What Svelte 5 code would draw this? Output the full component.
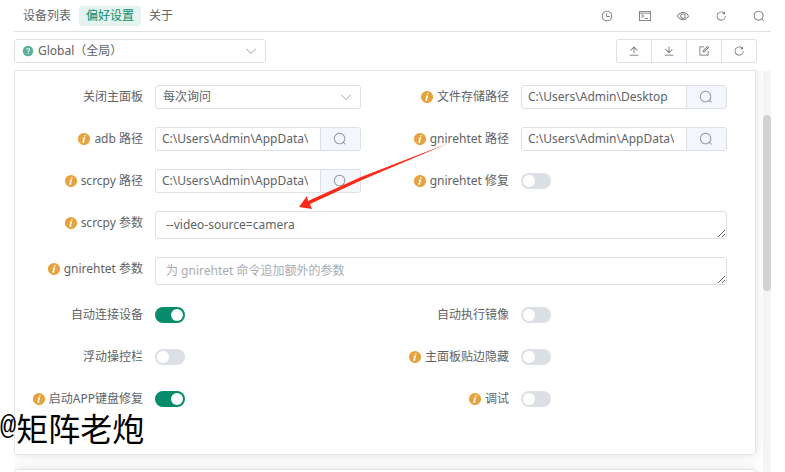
<script>
  const icons = {
    clock:
      "M512 896a384 384 0 1 0 0-768 384 384 0 0 0 0 768zm0 64a448 448 0 1 1 0-896 448 448 0 0 1 0 896z M480 256a32 32 0 0 1 32 32v256a32 32 0 0 1-64 0V288a32 32 0 0 1 32-32z M480 512h256q32 0 32 32t-32 32H480q-32 0-32-32t32-32z",
    terminal:
      "M0 96h1024v832H0zM64 288v576h896V288zM64 160v64h896v-64z M210 380l46-46 190 170-190 170-46-46 140-124z M480 690h290v64H480z",
    view: "M512 160c320 0 512 352 512 352S832 864 512 864 0 512 0 512s192-352 512-352zm0 64c-225.28 0-384.128 208.064-436.8 288 52.608 79.872 211.456 288 436.8 288 225.28 0 384.128-208.064 436.8-288-52.608-79.872-211.456-288-436.8-288zm0 64a224 224 0 1 1 0 448 224 224 0 0 1 0-448zm0 64a160.192 160.192 0 0 0-160 160c0 88.192 71.744 160 160 160s160-71.808 160-160-71.744-160-160-160z",
    refresh:
      "M784.512 230.272v-50.56a32 32 0 1 1 64 0v149.056a32 32 0 0 1-32 32H667.52a32 32 0 1 1 0-64h92.992A320 320 0 1 0 524.8 833.152a320 320 0 0 0 320-320h64a384 384 0 0 1-384 384 384 384 0 0 1-384-384 384 384 0 0 1 643.712-282.88z",
    search:
      "m795.904 750.72 124.992 124.928a32 32 0 0 1-45.248 45.248L750.656 795.904a416 416 0 1 1 45.248-45.248zM480 832a352 352 0 1 0 0-704 352 352 0 0 0 0 704z",
    upload:
      "M160 832h704a32 32 0 1 1 0 64H160a32 32 0 1 1 0-64m384-578.304V704h-64V247.296L237.248 490.048 192 444.8 508.8 128l316.8 316.8-45.312 45.248z",
    download:
      "M160 832h704a32 32 0 1 1 0 64H160a32 32 0 1 1 0-64m384-253.696 236.288-236.352 45.248 45.248L508.8 704 192 387.2l45.248-45.248L480 584.704V128h64z",
    edit: "M832 512a32 32 0 1 1 64 0v352a32 32 0 0 1-32 32H160a32 32 0 0 1-32-32V160a32 32 0 0 1 32-32h352a32 32 0 0 1 0 64H192v640h640z M469.952 554.24l52.8-7.552L847.104 222.4a32 32 0 1 0-45.248-45.248L477.44 501.44l-7.552 52.8zm422.4-422.4a96 96 0 0 1 0 135.808l-331.84 331.84a32 32 0 0 1-18.112 9.088L436.8 623.68a32 32 0 0 1-36.224-36.224l15.104-105.6a32 32 0 0 1 9.024-18.112l331.904-331.84a96 96 0 0 1 135.744 0z",
    arrow:
      "M831.872 340.864 512 652.672 192.128 340.864a30.592 30.592 0 0 0-42.752 0 29.12 29.12 0 0 0 0 41.6L489.664 714.24a32 32 0 0 0 44.672 0l340.288-331.712a29.12 29.12 0 0 0 0-41.728 30.592 30.592 0 0 0-42.752 0z",
    info: "M512 64a448 448 0 1 1 0 896.064A448 448 0 0 1 512 64zm67.2 275.072c33.28 0 60.288-23.104 60.288-57.344s-27.072-57.344-60.288-57.344c-33.28 0-60.16 23.104-60.16 57.344s26.88 57.344 60.16 57.344zM590.912 699.2c0-6.848 2.368-24.64 1.024-34.752l-52.608 60.544c-10.88 11.456-24.512 19.392-30.912 17.28a12.992 12.992 0 0 1-8.256-14.72l87.68-276.992c7.168-35.136-12.544-67.2-54.336-71.296-44.096 0-108.992 44.736-148.48 101.504 0 6.784-1.28 23.68.064 33.792l52.544-60.608c10.88-11.328 23.552-19.328 29.952-17.152a12.8 12.8 0 0 1 7.808 16.128L388.48 728.576c-10.048 32.256 8.96 63.872 55.04 71.04 67.84 0 107.904-43.648 147.456-100.416z",
    question:
      "M512 64a448 448 0 1 1 0 896 448 448 0 0 1 0-896zm23.744 191.488c-52.096 0-92.928 14.784-123.2 44.352-30.976 29.568-45.76 70.4-45.76 122.496h80.256c0-29.568 5.632-52.8 17.6-68.992 13.376-19.712 35.2-28.864 66.176-28.864 23.936 0 42.944 6.336 56.32 19.712 12.672 13.376 19.712 31.68 19.712 54.912 0 17.6-6.336 34.496-19.008 49.984l-8.448 9.856c-45.76 40.832-73.216 70.4-82.368 89.408-9.856 19.008-14.08 42.24-14.08 68.992v9.856h80.96v-9.856c0-16.896 3.52-31.68 10.56-45.76 6.336-12.672 15.488-24.64 28.16-35.2 33.792-29.568 54.208-48.576 60.544-55.616 16.896-22.528 26.048-51.392 26.048-86.592 0-42.944-14.08-76.736-42.24-101.376-28.16-25.344-65.472-37.312-111.232-37.312zm-12.672 406.208a54.272 54.272 0 0 0-38.72 14.784 49.408 49.408 0 0 0-15.488 38.016c0 15.488 4.928 28.16 15.488 38.016A54.848 54.848 0 0 0 523.072 768c15.488 0 28.16-4.928 38.72-14.784a51.52 51.52 0 0 0 16.192-38.72 51.968 51.968 0 0 0-15.488-38.016 55.936 55.936 0 0 0-39.424-14.784z",
  }

  const tabs = ["设备列表", "偏好设置", "关于"]
  let activeTab = $state("偏好设置")

  const headerActions = [
    { icon: "clock", title: "历史" },
    { icon: "terminal", title: "终端" },
    { icon: "view", title: "主题" },
    { icon: "refresh", title: "重启" },
    { icon: "search", title: "搜索" },
  ]

  const configActions = [
    { icon: "upload", title: "导出" },
    { icon: "download", title: "导入" },
    { icon: "edit", title: "编辑" },
    { icon: "refresh", title: "重置" },
  ]

  let fields = $state([
    { name: "closeMode", label: "关闭主面板", type: "select", options: ["每次询问", "最小化", "退出"], value: "每次询问" },
    { name: "savePath", label: "文件存储路径", type: "path", tip: true, value: "C:\\Users\\Admin\\Desktop" },
    { name: "adbPath", label: "adb 路径", type: "path", tip: true, value: "C:\\Users\\Admin\\AppData\\Local" },
    { name: "gnirehtetPath", label: "gnirehtet 路径", type: "path", tip: true, value: "C:\\Users\\Admin\\AppData\\Local" },
    { name: "scrcpyPath", label: "scrcpy 路径", type: "path", tip: true, value: "C:\\Users\\Admin\\AppData\\Local" },
    { name: "gnirehtetFix", label: "gnirehtet 修复", type: "switch", tip: true, value: false },
    { name: "scrcpyAppend", label: "scrcpy 参数", type: "textarea", tip: true, value: "--video-source=camera" },
    {
      name: "gnirehtetAppend",
      label: "gnirehtet 参数",
      type: "textarea",
      tip: true,
      value: "",
      placeholder: "为 gnirehtet 命令追加额外的参数",
    },
    { name: "autoConnect", label: "自动连接设备", type: "switch", value: true },
    { name: "autoMirror", label: "自动执行镜像", type: "switch", value: false },
    { name: "floatControl", label: "浮动操控栏", type: "switch", value: false },
    { name: "edgeHidden", label: "主面板贴边隐藏", type: "switch", tip: true, value: false },
    { name: "imeFix", label: "启动APP键盘修复", type: "switch", tip: true, value: true },
    { name: "debug", label: "调试", type: "switch", tip: true, value: false },
  ])
</script>

{#snippet icon(name, cls = "")}
  <svg class="icon {cls}" viewBox="0 0 1024 1024" aria-hidden="true">
    <path fill-rule={name === "terminal" ? "evenodd" : "nonzero"} d={icons[name]} />
  </svg>
{/snippet}

<div class="app">
  <header class="header">
    <nav class="tabs">
      {#each tabs as tab}
        <button class="tab" class:active={tab === activeTab} onclick={() => (activeTab = tab)}>{tab}</button>
      {/each}
    </nav>
    <div class="header-actions">
      {#each headerActions as action}
        <button class="icon-button" aria-label={action.title}>{@render icon(action.icon)}</button>
      {/each}
    </div>
  </header>

  <div class="toolbar">
    <div class="select scope">
      {@render icon("question", "question")}
      <select aria-label="配置范围">
        <option>Global（全局）</option>
      </select>
      {@render icon("arrow", "arrow")}
    </div>
    <div class="button-group">
      {#each configActions as action}
        <button aria-label={action.title}>{@render icon(action.icon)}</button>
      {/each}
    </div>
  </div>

  <div class="body">
    <main class="scroll">
      <form class="card form">
        {#each fields as field}
          <label class="label" for={field.name}>
            {#if field.tip}
              {@render icon("info", "info")}
            {/if}
            <span>{field.label}</span>
          </label>
          <div class="control" class:wide={field.type === "textarea"}>
            {#if field.type === "select"}
              <div class="select">
                <select id={field.name} bind:value={field.value}>
                  {#each field.options as option}
                    <option>{option}</option>
                  {/each}
                </select>
                {@render icon("arrow", "arrow")}
              </div>
            {:else if field.type === "path"}
              <div class="path">
                <input id={field.name} type="text" bind:value={field.value} />
                <button type="button" aria-label="选择路径">{@render icon("search", "search")}</button>
              </div>
            {:else if field.type === "textarea"}
              <textarea id={field.name} rows="1" placeholder={field.placeholder} bind:value={field.value}></textarea>
            {:else}
              <input id={field.name} class="switch" type="checkbox" role="switch" bind:checked={field.value} />
            {/if}
          </div>
        {/each}
      </form>
      <section class="card next"></section>
    </main>
    <div class="scrollbar"><div class="thumb"></div></div>
  </div>

  <svg class="pointer" viewBox="0 0 150 68" aria-hidden="true">
    <path d="M150 0 63 37 11 61 13 66 0 64 8 53 9 58 62 34z" />
  </svg>
  <div class="watermark"><span>@</span>矩阵老炮</div>
</div>

<style>
  :global(body) {
    margin: 0;
    background: #fff;
  }

  .app {
    --primary: #068b6b;
    --text: #606266;
    --border: #dcdfe6;
    position: relative;
    box-sizing: border-box;
    height: 100vh;
    padding: 0 14px;
    display: flex;
    flex-direction: column;
    overflow: hidden;
    color: var(--text);
    font-family: "Noto Sans", "Noto Sans CJK SC", sans-serif;
    font-size: 12px;
    line-height: 20px;
  }

  button,
  input,
  select,
  textarea {
    box-sizing: border-box;
    margin: 0;
    padding: 0;
    border: 0;
    background: none;
    color: inherit;
    font: inherit;
    outline: none;
  }

  button {
    cursor: pointer;
  }

  .icon {
    display: block;
    flex: none;
    width: 12px;
    height: 12px;
    fill: currentColor;
  }

  .header {
    display: flex;
    flex: none;
    align-items: center;
    justify-content: space-between;
    height: 31px;
    border-bottom: 1px solid var(--border);
  }

  .tabs {
    display: flex;
    gap: 1px;
    padding-left: 2px;
  }

  .tab {
    padding: 0 7px;
    border-radius: 2px;
    white-space: nowrap;
  }

  .tab.active {
    background: #e4f3f0;
    color: var(--primary);
  }

  .header-actions {
    display: flex;
    gap: 14px;
  }

  .icon-button {
    padding: 6px;
  }

  .toolbar {
    display: flex;
    flex: none;
    justify-content: space-between;
    padding: 7px 14px 7px 0;
  }

  .select {
    box-sizing: border-box;
    display: flex;
    align-items: center;
    width: 100%;
    height: 24px;
    padding: 0 7px;
    border: 1px solid var(--border);
    border-radius: 3px;
  }

  .select select {
    flex: 1;
    min-width: 0;
    appearance: none;
  }

  .scope {
    width: 252px;
    gap: 4px;
  }

  .question {
    color: #57b09b;
  }

  .arrow {
    width: 14px;
    height: 14px;
    color: #a8abb2;
    pointer-events: none;
  }

  .button-group {
    display: flex;
    border: 1px solid var(--border);
    border-radius: 3px;
  }

  .button-group button {
    padding: 0 11px;
  }

  .button-group button + button {
    border-left: 1px solid var(--border);
  }

  .body {
    display: flex;
    flex: 1;
    min-height: 0;
  }

  .scroll {
    flex: 1;
    min-width: 0;
    padding-right: 7px;
    overflow: hidden;
  }

  .card {
    border: 1px solid #e1e4ea;
    border-radius: 0 0 4px 4px;
    box-shadow: 0 0 12px rgba(0, 0, 0, 0.12);
  }

  .form {
    display: grid;
    grid-template-columns: 140px 1fr 160px 1fr;
    row-gap: 18px;
    padding: 14px 28px 43px 0;
  }

  .next {
    height: 60px;
    margin-top: 14px;
    border-radius: 4px;
  }

  .label {
    display: flex;
    align-items: center;
    justify-content: flex-end;
    gap: 3px;
    height: 24px;
    padding-right: 12px;
    white-space: nowrap;
  }

  .info {
    width: 14px;
    height: 14px;
    color: #e6a23c;
  }

  .control {
    display: flex;
    align-items: center;
    min-width: 0;
    min-height: 24px;
  }

  .wide {
    grid-column: span 3;
  }

  .path {
    box-sizing: border-box;
    display: flex;
    width: 100%;
    height: 24px;
    border: 1px solid var(--border);
    border-radius: 3px;
    overflow: hidden;
  }

  .path input {
    flex: 1;
    min-width: 0;
    margin: 0 12px 0 6px;
  }

  .path button {
    width: 40px;
    padding: 0 12px;
    border-left: 1px solid var(--border);
    background: #f3f6fa;
    color: #909399;
  }

  .search {
    width: 14px;
    height: 14px;
  }

  textarea {
    display: block;
    width: 100%;
    height: 28px;
    padding: 3px 10px;
    border: 1px solid var(--border);
    border-radius: 3px;
    resize: vertical;
    overflow: hidden;
  }

  textarea::placeholder {
    color: #a8abb2;
  }

  .switch {
    appearance: none;
    display: flex;
    align-items: center;
    width: 30px;
    height: 16px;
    padding: 0 2px;
    border-radius: 8px;
    background: var(--border);
    cursor: pointer;
  }

  .switch::before {
    content: "";
    width: 12px;
    height: 12px;
    border-radius: 50%;
    background: #fff;
  }

  .switch:checked {
    justify-content: flex-end;
    background: var(--primary);
  }

  .scrollbar {
    width: 8px;
    margin-top: 1px;
    background: #f4f4f4;
  }

  .thumb {
    height: 44%;
    margin-top: 44px;
    border-radius: 4px;
    background: #d3d3d3;
  }

  .pointer {
    position: absolute;
    top: 143px;
    left: 299px;
    width: 150px;
    height: 68px;
    fill: #fb2a18;
    pointer-events: none;
  }

  .watermark {
    position: absolute;
    top: 407px;
    left: 0;
    display: flex;
    align-items: center;
    color: #000;
    font-family: "Noto Sans CJK SC", sans-serif;
    font-size: 32px;
    line-height: 40px;
    pointer-events: none;
  }

  .watermark span {
    font-family: "Liberation Mono", monospace;
    font-size: 27px;
  }
</style>
